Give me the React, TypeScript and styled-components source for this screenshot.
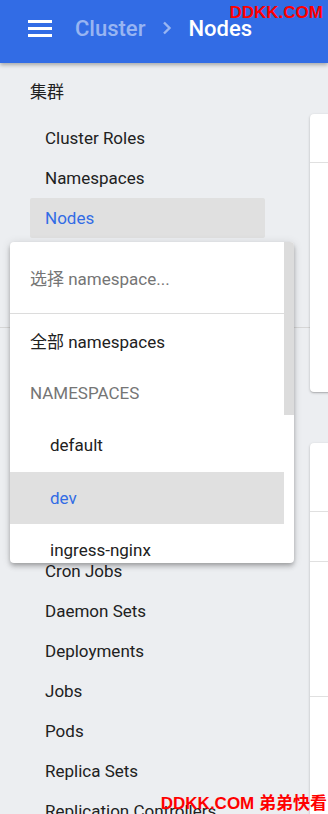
import React from 'react';
import styled, { createGlobalStyle } from 'styled-components';

const GlobalStyle = createGlobalStyle`
  html, body {
    margin: 0;
    padding: 0;
    background: #eceef1;
    font-family: Roboto, "Noto Sans CJK SC", "Liberation Sans", sans-serif;
    color: #212121;
  }
  * { box-sizing: border-box; }
`;

const Page = styled.div`
  position: relative;
  width: 328px;
  height: 814px;
  overflow: hidden;
  background: #eceef1;
`;

const Header = styled.header`
  position: relative;
  z-index: 2;
  height: 63px;
  padding-bottom: 7px;
  background: #326ce5;
  box-shadow: 0 2px 4px rgba(0, 0, 0, 0.3);
`;

const Toolbar = styled.div`
  height: 56px;
  display: flex;
  align-items: center;
  padding-left: 28px;
`;

const MenuButton = styled.div`
  display: flex;
  width: 24px;
  height: 17px;
  margin-right: 23px;
`;

const Crumb = styled.span<{ $current?: boolean }>`
  font-size: 22px;
  font-weight: 500;
  color: ${p => (p.$current ? '#ffffff' : 'rgba(255, 255, 255, 0.5)')};
`;

const Chevron = styled.svg`
  margin: 0 16px 0 17px;
`;

const Body = styled.div`
  display: flex;
`;

const Sidebar = styled.nav`
  width: 310px;
  flex-shrink: 0;
  padding-top: 9px;
`;

const SectionTitle = styled.div<{ $top?: number }>`
  height: 40px;
  line-height: 40px;
  margin: ${p => p.$top ?? 0}px 0 6px;
  padding-left: 30px;
  font-size: 17px;
`;

const NavItem = styled.div<{ $active?: boolean }>`
  height: 40px;
  line-height: 40px;
  margin: 0 45px 0 30px;
  padding-left: 15px;
  font-size: 17px;
  white-space: nowrap;
  border-radius: 2px;
  color: ${p => (p.$active ? '#326ce5' : '#212121')};
  background: ${p => (p.$active ? '#e0e0e0' : 'transparent')};
`;

const Divider = styled.div<{ $space: number }>`
  height: 1px;
  margin: ${p => p.$space}px 0;
  background: #d6d6d6;
`;

const SelectBox = styled.div`
  height: 56px;
`;

const Main = styled.main`
  flex: 1;
  padding-top: 51px;
  min-width: 0;
`;

const Card = styled.section`
  width: 400px;
  background: #fff;
  border-radius: 4px;
  box-shadow: 0 1px 3px rgba(0, 0, 0, 0.2), 0 1px 1px rgba(0, 0, 0, 0.12);
  margin-bottom: 51px;
`;

const CardRow = styled.div<{ $h: number; $last?: boolean }>`
  height: ${p => p.$h}px;
  border-bottom: ${p => (p.$last ? 'none' : '1px solid #e0e0e0')};
`;

const Dropdown = styled.div`
  position: absolute;
  z-index: 3;
  left: 10px;
  top: 242px;
  width: 284px;
  height: 321px;
  display: flex;
  background: #fff;
  border-radius: 4px;
  overflow: hidden;
  box-shadow: 0 2px 4px -1px rgba(0, 0, 0, 0.2), 0 4px 5px rgba(0, 0, 0, 0.14),
    0 1px 10px rgba(0, 0, 0, 0.12);
`;

const OptionList = styled.div`
  flex: 1;
  min-width: 0;
  overflow: hidden;
`;

const ScrollTrack = styled.div`
  width: 10px;
  flex-shrink: 0;
`;

const ScrollThumb = styled.div`
  height: 173px;
  background: #dcdcdc;
`;

const Search = styled.div`
  height: 72px;
  padding-left: 20px;
  display: flex;
  align-items: center;
  font-size: 17px;
  color: #757575;
  border-bottom: 1px solid #dcdcdc;
`;

const Option = styled.div<{ $indent?: boolean; $selected?: boolean; $label?: boolean }>`
  height: 52.5px;
  display: flex;
  align-items: center;
  padding-left: ${p => (p.$indent ? 40 : 20)}px;
  font-size: 17px;
  white-space: nowrap;
  color: ${p => (p.$selected ? '#326ce5' : p.$label ? '#757575' : '#212121')};
  background: ${p => (p.$selected ? '#e0e0e0' : 'transparent')};
`;

const Watermark = styled.div<{ $top: number; $right: number }>`
  position: absolute;
  z-index: 5;
  top: ${p => p.$top}px;
  right: ${p => p.$right}px;
  font-family: "Liberation Sans", "Noto Sans CJK SC", sans-serif;
  font-weight: 700;
  font-size: 17px;
  line-height: 20px;
  color: #ff0000;
  white-space: nowrap;
`;

const namespaces = [
  'default',
  'dev',
  'ingress-nginx',
  'kube-node-lease',
  'kube-public',
  'kube-system',
  'kubernetes-dashboard',
  'test',
];

const App: React.FC = () => {
  return (
    <Page>
      <GlobalStyle />
      <Header>
        <Toolbar>
          <MenuButton>
            <svg width="24" height="17" viewBox="0 0 24 17">
              <rect x="0" y="0" width="24" height="3" fill="#fff" />
              <rect x="0" y="7" width="24" height="3" fill="#fff" />
              <rect x="0" y="14" width="24" height="3" fill="#fff" />
            </svg>
          </MenuButton>
          <Crumb>Cluster</Crumb>
          <Chevron width="10" height="14" viewBox="0 0 10 14">
            <path d="M2 1.5 L7.5 7 L2 12.5" stroke="rgba(255,255,255,0.5)" strokeWidth="2.4" fill="none" />
          </Chevron>
          <Crumb $current>Nodes</Crumb>
        </Toolbar>
      </Header>

      <Body>
        <Sidebar>
          <SectionTitle>集群</SectionTitle>
          <NavItem>Cluster Roles</NavItem>
          <NavItem>Namespaces</NavItem>
          <NavItem $active>Nodes</NavItem>
          <NavItem>Persistent Volumes</NavItem>
          <NavItem>Storage Classes</NavItem>
          <Divider $space={9} />
          <SectionTitle $top={7}>命名空间</SectionTitle>
          <SelectBox />
          <div style={{ height: 17 }} />
          <NavItem>概况</NavItem>
          <SectionTitle $top={9}>工作负载</SectionTitle>
          <NavItem>Cron Jobs</NavItem>
          <NavItem>Daemon Sets</NavItem>
          <NavItem>Deployments</NavItem>
          <NavItem>Jobs</NavItem>
          <NavItem>Pods</NavItem>
          <NavItem>Replica Sets</NavItem>
          <NavItem>Replication Controllers</NavItem>
          <NavItem>Stateful Sets</NavItem>
        </Sidebar>
        <Main>
          <Card>
            <CardRow $h={49} />
            <CardRow $h={229} $last />
          </Card>
          <Card>
            <CardRow $h={69} />
            <CardRow $h={50} />
            <CardRow $h={135} />
            <CardRow $h={200} $last />
          </Card>
        </Main>
      </Body>

      <Dropdown>
        <OptionList>
          <Search>选择 namespace...</Search>
          <Option>全部 namespaces</Option>
          <Option $label>NAMESPACES</Option>
          {namespaces.map(ns => (
            <Option key={ns} $indent $selected={ns === 'dev'}>
              {ns}
            </Option>
          ))}
        </OptionList>
        <ScrollTrack>
          <ScrollThumb />
        </ScrollTrack>
      </Dropdown>

      <Watermark $top={3} $right={5}>DDKK.COM</Watermark>
      <Watermark $top={794} $right={1}>DDKK.COM 弟弟快看</Watermark>
    </Page>
  );
};

export default App;
